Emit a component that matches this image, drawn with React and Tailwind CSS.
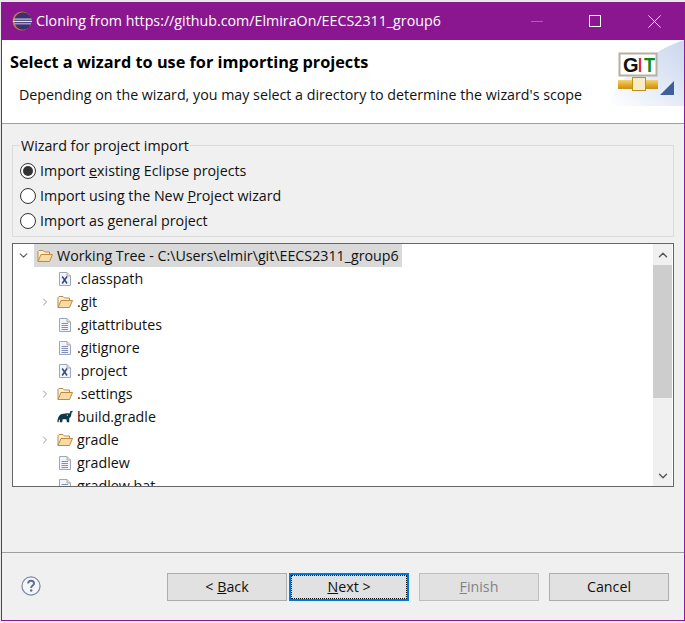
import { ChevronDown, ChevronRight, ChevronUp } from "lucide-react";

const font = "font-['Open_Sans','Noto_Sans',sans-serif]";

const rows = [
  { name: ".classpath", icon: "xml" },
  { name: ".git", icon: "folder", arrow: true },
  { name: ".gitattributes", icon: "doc" },
  { name: ".gitignore", icon: "doc" },
  { name: ".project", icon: "xml" },
  { name: ".settings", icon: "folder", arrow: true },
  { name: "build.gradle", icon: "gradle" },
  { name: "gradle", icon: "folder", arrow: true },
  { name: "gradlew", icon: "doc" },
  { name: "gradlew.bat", icon: "doc" },
];

function EclipseLogo() {
  return (
    <svg width="20" height="20" viewBox="0 0 20 20">
      <circle cx="10" cy="10" r="9.5" fill="#c77a3a" />
      <circle cx="11" cy="10" r="8.7" fill="#3a3170" />
      <rect x="1.5" y="7.5" width="18" height="1.2" fill="#cfc8de" />
      <rect x="1" y="9.8" width="19" height="1.3" fill="#e6e2ee" />
      <rect x="2" y="12.2" width="17" height="1.2" fill="#b9b2cf" />
    </svg>
  );
}

function FolderIcon() {
  return (
    <svg width="16" height="14" viewBox="0 0 16 14" fill="none">
      <path d="M1 12.5V2.5L2 1.5H6L7.5 3H12.5V5" stroke="#b98a4a" fill="#fdf0d5" />
      <path d="M1 12.5L4 5.5H15.5L12.5 12.5Z" fill="#f8dca6" stroke="#c0893f" />
    </svg>
  );
}

function DocIcon({ xml }) {
  return (
    <svg width="12" height="14" viewBox="0 0 12 14">
      <path d="M.5.5H8L11.5 4V13.5H.5Z" fill="#f1f4fb" stroke="#9aa6c4" />
      <path d="M8 .5V4H11.5" fill="#e6e0c8" stroke="#b5ac88" />
      {xml ? (
        <path d="M3.2 4.5L8 11.5M8 4.5L3.2 11.5" stroke="#34468a" strokeWidth="1.5" />
      ) : (
        <path d="M2.5 5.5H9M2.5 7.5H9M2.5 9.5H9M2.5 11.5H9" stroke="#7f8fb8" />
      )}
    </svg>
  );
}

function GradleIcon() {
  return (
    <svg width="17" height="13" viewBox="0 0 17 13">
      <path
        d="M.5 12.5C.5 7 3 3.5 7 3.5L11 3C12.5 3 13 3.5 13.5 3L14 1L16.5.3V1.8L15.5 2.2L15 5.5C14.5 7.5 13.5 8 13 8V12.5H10.5L10 9.5H6L5.5 12.5H3V9.5C2 10 1.8 11 1.8 12.5Z"
        fill="#0f3a46"
      />
      <circle cx="11" cy="5" r="0.7" fill="#fff" />
    </svg>
  );
}

function RowIcon({ type }) {
  if (type == "folder") return <FolderIcon />;
  if (type == "gradle") return <GradleIcon />;
  return <DocIcon xml={type == "xml"} />;
}

function GitBanner() {
  return (
    <svg width="76" height="66" viewBox="0 0 76 66" className="absolute top-0 right-0">
      <defs>
        <linearGradient id="bg" x1="0" y1="1" x2="1" y2="0">
          <stop offset="0" stopColor="#ffffff" />
          <stop offset="1" stopColor="#c9d6ee" />
        </linearGradient>
        <linearGradient id="pipe" x1="0" y1="0" x2="0" y2="1">
          <stop offset="0" stopColor="#f3d27a" />
          <stop offset="0.5" stopColor="#e3ae2c" />
          <stop offset="1" stopColor="#c98f14" />
        </linearGradient>
      </defs>
      <path d="M0 66C8 40 40 12 76 0V66Z" fill="url(#bg)" />
      <rect x="11.5" y="13.5" width="37" height="22" fill="#fff" stroke="#b5b09f" strokeWidth="2" />
      <text x="15" y="32" fontFamily="'Liberation Sans', sans-serif" fontWeight="700" fontSize="20" fill="#111">G</text>
      <text x="30" y="32" fontFamily="'Liberation Sans', sans-serif" fontWeight="700" fontSize="20" textLength="4" lengthAdjust="spacingAndGlyphs" fill="#d22">I</text>
      <text x="36" y="32" fontFamily="'Liberation Sans', sans-serif" fontWeight="700" fontSize="20" textLength="11" lengthAdjust="spacingAndGlyphs" fill="#0a8a1a">T</text>
      <rect x="10" y="40" width="40" height="9" fill="url(#pipe)" />
      <rect x="24.5" y="37.5" width="13" height="13" fill="#f8ecc4" stroke="#c0901a" />
      <path d="M52 55L66 41V55Z" fill="#3f5f9c" />
    </svg>
  );
}

function Radio({ checked, children }) {
  return (
    <div className="flex items-center h-[25px] gap-1">
      <span className="w-[16px] h-[16px] rounded-full border border-[#333] bg-white flex items-center justify-center">
        {checked && <span className="w-[10px] h-[10px] rounded-full bg-[#333]" />}
      </span>
      <span>{children}</span>
    </div>
  );
}

function Btn({ children, className = "" }) {
  return (
    <button className={"w-[120px] h-[28px] border bg-[#e1e1e1] text-center " + className}>
      {children}
    </button>
  );
}

export default function App() {
  return (
    <div className={"w-[685px] h-[623px] bg-[#e8e8e8] pt-[2px] pb-[2px] pl-px overflow-hidden text-[14.25px] text-[#111] " + font}>
      <div className="h-full border-x border-b border-[#8a1a92] bg-[#f0f0f0] flex flex-col">
        {/* Title bar */}
        <div className="h-[38px] shrink-0 bg-[#8a1790] flex items-center pl-[10px] text-white">
          <EclipseLogo />
          <span className="ml-[4px] flex-1">Cloning from https://github.com/ElmiraOn/EECS2311_group6</span>
          <span className="w-[12px] h-px bg-[#a860ac] mr-[46px]" />
          <span className="w-[12px] h-[12px] border border-white mr-[47px]" />
          <svg width="13" height="13" viewBox="0 0 13 13" className="mr-[23px]" stroke="white">
            <path d="M.5.5L12.5 12.5M12.5.5L.5 12.5" />
          </svg>
        </div>

        {/* Header */}
        <div className="relative h-[84px] shrink-0 bg-white border-b border-[#a0a0a0] pl-[8px] pt-[11px]">
          <div className="font-bold text-[16.3px] leading-[22px] text-black">Select a wizard to use for importing projects</div>
          <div className="ml-[9px] mt-[12px] leading-[20px]">Depending on the wizard, you may select a directory to determine the wizard's scope</div>
          <GitBanner />
        </div>

        {/* Body */}
        <div className="flex-1 px-[10px] pt-[12px]">
          <fieldset className="h-[101px] border border-[#dcdcdc] pl-[7px] pr-2">
            <legend className="px-[1px] leading-[19px]">Wizard for project import</legend>
            <div className="mt-[3px]">
              <Radio checked>Import <u>e</u>xisting Eclipse projects</Radio>
              <Radio>Import using the New <u>P</u>roject wizard</Radio>
              <Radio>Import as <u>g</u>eneral project</Radio>
            </div>
          </fieldset>

          <div className="mt-[6px] h-[244px] border border-[#666] bg-white flex overflow-hidden">
            <div className="flex-1 overflow-hidden">
              <div className="flex items-center h-[23px]">
                <span className="w-[21px] flex justify-center text-[#555]"><ChevronDown size={13} strokeWidth={2} /></span>
                <div className="flex items-center bg-[#d9d9d9] w-[368px] h-[23px] pl-[3px] gap-[4px]">
                  <FolderIcon />
                  <span>Working Tree - C:\Users\elmir\git\EECS2311_group6</span>
                </div>
              </div>
              {rows.map((row) => (
                <div key={row.name} className="flex items-center h-[23px]">
                  <span className="w-[24px] ml-[20px] flex justify-center text-[#999]">
                    {row.arrow && <ChevronRight size={12} strokeWidth={2} />}
                  </span>
                  <span className="w-[16px] flex justify-center"><RowIcon type={row.icon} /></span>
                  <span className="ml-[4px]">{row.name}</span>
                </div>
              ))}
            </div>
            <div className="w-[19px] mr-px shrink-0 bg-[#f0f0f0] flex flex-col">
              <span className="h-[21px] flex items-center justify-center text-[#555]"><ChevronUp size={14} strokeWidth={2.4} /></span>
              <span className="h-[133px] bg-[#cdcdcd]" />
              <span className="flex-1" />
              <span className="h-[21px] flex items-center justify-center text-[#555]"><ChevronDown size={14} strokeWidth={2.4} /></span>
            </div>
          </div>
        </div>

        {/* Footer */}
        <div className="h-[68px] shrink-0 border-t border-[#a0a0a0] flex items-center pl-[19px] pt-[1px]">
          <svg width="20" height="20" viewBox="0 0 21 21" className="mr-[126px] -mt-[2px]">
            <circle cx="10.5" cy="10.5" r="9.5" fill="#f4f6fa" stroke="#7b8aa8" strokeWidth="1.3" />
            <path d="M7.5 8C7.5 6 9 5 10.5 5C12.5 5 13.7 6.3 13.7 7.8C13.7 10 10.7 10 10.7 12.5" fill="none" stroke="#5f6f90" strokeWidth="2" />
            <circle cx="10.7" cy="15.3" r="1.3" fill="#5f6f90" />
          </svg>
          <div className="flex items-center">
            <Btn className="border-[#adadad]">&lt; <u>B</u>ack</Btn>
            <Btn className="ml-[2px] border-2 border-[#0078d7] outline-1 outline-dotted -outline-offset-3 outline-black"><u>N</u>ext &gt;</Btn>
            <Btn className="ml-[10px] bg-[#cccccc] border-[#bfbfbf] text-[#838383]"><u>F</u>inish</Btn>
            <Btn className="ml-[10px] border-[#adadad]">Cancel</Btn>
          </div>
        </div>
      </div>
    </div>
  );
}
